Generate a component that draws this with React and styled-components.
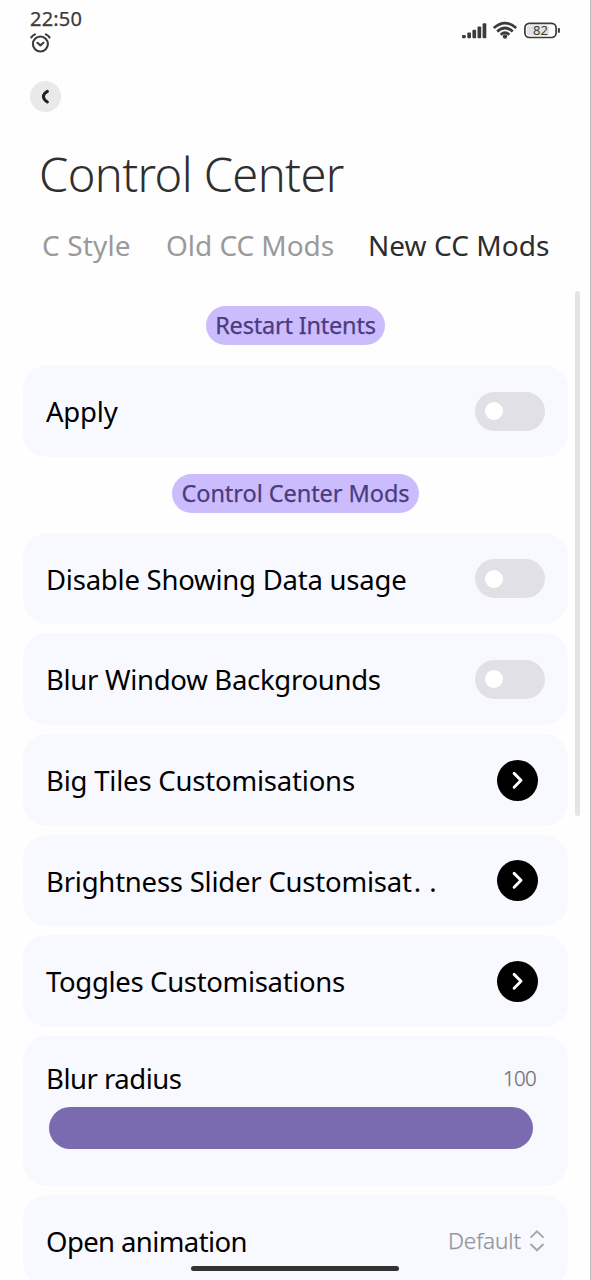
import React from "react";
import styled, { createGlobalStyle } from "styled-components";

const GlobalStyle = createGlobalStyle`
  * { box-sizing: border-box; }
  html, body { margin: 0; padding: 0; background: #fefefe; overflow: hidden; }
  body { font-family: "Noto Sans", "Open Sans", sans-serif; color: #000; }
  h1, p { margin: 0; font-weight: inherit; }
  svg { display: block; }
`;

const Screen = styled.main`
  position: relative;
  width: 591px;
  height: 1280px;
  overflow: hidden;
  background: #fefefe;
  border-right: 1px solid #bdbdbd;
`;

const StatusBar = styled.header`
  display: flex;
  justify-content: space-between;
  height: 81px;
  padding: 9px 29px 0 30px;
  color: #3b3b3b;
`;

const ClockColumn = styled.div`
  display: flex;
  flex-direction: column;
  gap: 4px;
`;

const Clock = styled.time`
  font-size: 20px;
  line-height: 20px;
  height: 20px;
  font-weight: 400;
  -webkit-text-stroke: 0.25px currentColor;
  letter-spacing: 0.2px;
  white-space: nowrap;
`;

const StatusIcons = styled.div`
  display: flex;
  align-items: center;
  height: 22px;
  margin-top: 11px;
`;

const BackButton = styled.button`
  display: flex;
  align-items: center;
  justify-content: center;
  width: 31px;
  height: 31px;
  margin-left: 30px;
  padding: 0;
  border: 0;
  border-radius: 50%;
  background: #e9e9e9;
`;

const Title = styled.h1`
  margin: 34px 0 0 39px;
  font-size: 47px;
  line-height: 56px;
  font-weight: 300;
  letter-spacing: ${(p) => p.$spacing}px;
  color: #2f2f2f;
  white-space: nowrap;
`;

const Tabs = styled.nav`
  display: flex;
  height: 40px;
  margin-top: 23px;
  padding-left: 42px;
`;

const Tab = styled.div`
  flex: none;
  width: ${(p) => p.$width}px;
  font-size: 28px;
  line-height: 40px;
  letter-spacing: ${(p) => p.$spacing}px;
  color: ${(p) => (p.$active ? "#2d2d2d" : "#9a9a9a")};
  white-space: nowrap;
`;

const Settings = styled.section`
  display: flex;
  flex-direction: column;
  gap: 9px;
  padding: 41px 22px 0 23px;
`;

const SectionLabel = styled.div`
  display: flex;
  align-items: center;
  justify-content: center;
  align-self: center;
  width: ${(p) => p.$width}px;
  height: 39px;
  margin: ${(p) => p.$top}px 0 11px;
  padding-bottom: 1px;
  border-radius: 20px;
  background: #cbbdfd;
  color: #4b3b7f;
  font-size: 23.5px;
  font-weight: 400;
  -webkit-text-stroke: 0.25px currentColor;
  letter-spacing: ${(p) => p.$spacing}px;
  white-space: nowrap;
`;

const Card = styled.div`
  flex: none;
  height: ${(p) => p.$height || 91.7}px;
  padding: 0 23px;
  border-radius: 24px;
  background: #f8f9ff;
`;

const Row = styled.div`
  display: flex;
  align-items: center;
  justify-content: space-between;
  height: 92px;
  padding-right: ${(p) => p.$end || 0}px;
`;

const Label = styled.p`
  padding-top: 2px;
  font-size: 27.5px;
  line-height: 40px;
  letter-spacing: ${(p) => p.$spacing}px;
  white-space: nowrap;
`;

const Dots = styled.span`
  margin-left: 2px;
  letter-spacing: 0px;
  word-spacing: 1px;
`;

const Switch = styled.div`
  display: flex;
  align-items: center;
  width: 70px;
  height: 39px;
  padding-left: 10px;
  border-radius: 20px;
  background: #e1e0e6;
`;

const Knob = styled.span`
  width: 18px;
  height: 18px;
  border-radius: 50%;
  background: #fff;
`;

const OpenButton = styled.div`
  display: flex;
  align-items: center;
  justify-content: center;
  width: 41px;
  height: 41px;
  border-radius: 50%;
  background: #000;
`;

const SliderHead = styled.div`
  display: flex;
  align-items: center;
  justify-content: space-between;
  height: 71px;
  padding: 12px 9px 0 0;
`;

const Value = styled.span`
  font-size: ${(p) => p.$size}px;
  line-height: 30px;
  font-weight: 300;
  -webkit-text-stroke: 0.25px currentColor;
  letter-spacing: ${(p) => p.$spacing}px;
  color: ${(p) => p.$color};
  white-space: nowrap;
`;

const SliderBar = styled.div`
  height: 42px;
  margin: 0 12px 0 3px;
  border-radius: 21px;
  background: #7a6bb0;
`;

const Choice = styled.div`
  display: flex;
  align-items: center;
  gap: 8px;
`;

const ScrollThumb = styled.div`
  position: absolute;
  top: 291px;
  left: 575px;
  width: 5px;
  height: 525px;
  border-radius: 3px;
  background: #e4e4e4;
`;

const HomeIndicator = styled.div`
  position: absolute;
  top: 1266px;
  left: 191px;
  width: 208px;
  height: 5px;
  border-radius: 3px;
  background: #333;
`;

const AlarmIcon = () => (
  <svg width="21" height="20" viewBox="0 0 21 20" fill="none" stroke="#3b3b3b" strokeWidth="2.1" strokeLinecap="round" strokeLinejoin="round">
    <circle cx="10.4" cy="11" r="7.5" />
    <path d="M1.3 4.4Q2.6 2.4 4.9 1.4M19.5 4.4Q18.2 2.4 15.9 1.4M7.4 9.8l3 2.6 3-2.6" />
  </svg>
);

const StatusGlyphs = () => (
  <svg width="99" height="20" viewBox="0 0 99 20" fill="none">
    <g fill="#3b3b3b">
      <rect x="0" y="13.9" width="3.8" height="3.4" rx="1" />
      <rect x="5.3" y="11.6" width="3.7" height="5.7" rx="1" />
      <rect x="10.4" y="8.8" width="3.7" height="8.5" rx="1" />
      <rect x="15.5" y="5.6" width="3.7" height="11.7" rx="1" />
      <rect x="20.6" y="2.2" width="3.7" height="15.1" rx="1" />
      <circle cx="43" cy="15.5" r="2.2" />
    </g>
    <g stroke="#3b3b3b" strokeWidth="2.7">
      <path d="M31.8 7.1Q43-3 54.2 7.1" />
      <path d="M35.2 10.5Q43 3.5 50.8 10.5" />
      <path d="M38.7 13.7Q43 9.7 47.3 13.7" />
    </g>
    <rect x="65" y="4.2" width="22" height="10.4" rx="2.4" fill="#e2e2e2" />
    <rect x="62.9" y="2.3" width="31.2" height="14.2" rx="4.4" stroke="#3b3b3b" strokeWidth="1.7" />
    <path d="M96.9 7.1v4.6" stroke="#3b3b3b" strokeWidth="2" />
    <text x="71" y="14.1" fontSize="13" fontFamily="Noto Sans, sans-serif" fontWeight="400" fill="#3b3b3b">82</text>
  </svg>
);

const BackIcon = () => (
  <svg width="31" height="31" viewBox="0 0 31 31" fill="none">
    <path d="M17.4 10.4Q13.4 12.6 13.4 15.6Q13.4 18.6 17.4 21" stroke="#1f1f1f" strokeWidth="3" strokeLinecap="round" />
  </svg>
);

const ChevronIcon = () => (
  <svg width="41" height="41" viewBox="0 0 41 41" fill="none" stroke="#fff" strokeWidth="2.9" strokeLinecap="round" strokeLinejoin="round">
    <path d="M17.1 13.4l6.9 6.9-6.9 6.9" />
  </svg>
);

const UpDownIcon = () => (
  <svg width="16" height="24" viewBox="0 0 16 24" fill="none" stroke="#a6a7ad" strokeWidth="2">
    <path d="M1.5 8.6L8 2.3l6.5 6.3M1.5 15L8 21.3l6.5-6.3" />
  </svg>
);

const SwitchRow = ({ label, spacing }) => (
  <Card>
    <Row>
      <Label $spacing={spacing}>{label}</Label>
      <Switch><Knob /></Switch>
    </Row>
  </Card>
);

const LinkRow = ({ label, spacing, trailing }) => (
  <Card>
    <Row $end={7}>
      <Label $spacing={spacing}>{label}{trailing && <Dots>{trailing}</Dots>}</Label>
      <OpenButton><ChevronIcon /></OpenButton>
    </Row>
  </Card>
);

export default function App() {
  return (
    <Screen>
      <GlobalStyle />
      <StatusBar>
        <ClockColumn>
          <Clock>22:50</Clock>
          <AlarmIcon />
        </ClockColumn>
        <StatusIcons><StatusGlyphs /></StatusIcons>
      </StatusBar>
      <BackButton aria-label="Back"><BackIcon /></BackButton>
      <Title $spacing={-0.6}>Control Center</Title>
      <Tabs>
        <Tab $width={124} $spacing={0.15}>C Style</Tab>
        <Tab $width={202} $spacing={-0.05}>Old CC Mods</Tab>
        <Tab $width={190} $spacing={0.05} $active>New CC Mods</Tab>
      </Tabs>
      <Settings>
        <SectionLabel $width={179} $top={0} $spacing={-0.2}>Restart Intents</SectionLabel>
        <SwitchRow label="Apply" spacing={-0.2} />
        <SectionLabel $width={247} $top={8} $spacing={-0.05}>Control Center Mods</SectionLabel>
        <SwitchRow label="Disable Showing Data usage" spacing={-0.23} />
        <SwitchRow label="Blur Window Backgrounds" spacing={-0.3} />
        <LinkRow label="Big Tiles Customisations" spacing={-0.2} />
        <LinkRow label="Brightness Slider Customisat" spacing={-0.22} trailing=". ." />
        <LinkRow label="Toggles Customisations" spacing={-0.33} />
        <Card $height={150}>
          <SliderHead>
            <Label $spacing={-0.49}>Blur radius</Label>
            <Value $size={20.5} $spacing={-0.7} $color="#6f7075">100</Value>
          </SliderHead>
          <SliderBar />
        </Card>
        <Card>
          <Row>
            <Label $spacing={-0.6}>Open animation</Label>
            <Choice>
              <Value $size={22.5} $spacing={-0.1} $color="#93949a">Default</Value>
              <UpDownIcon />
            </Choice>
          </Row>
        </Card>
      </Settings>
      <ScrollThumb />
      <HomeIndicator />
    </Screen>
  );
}
